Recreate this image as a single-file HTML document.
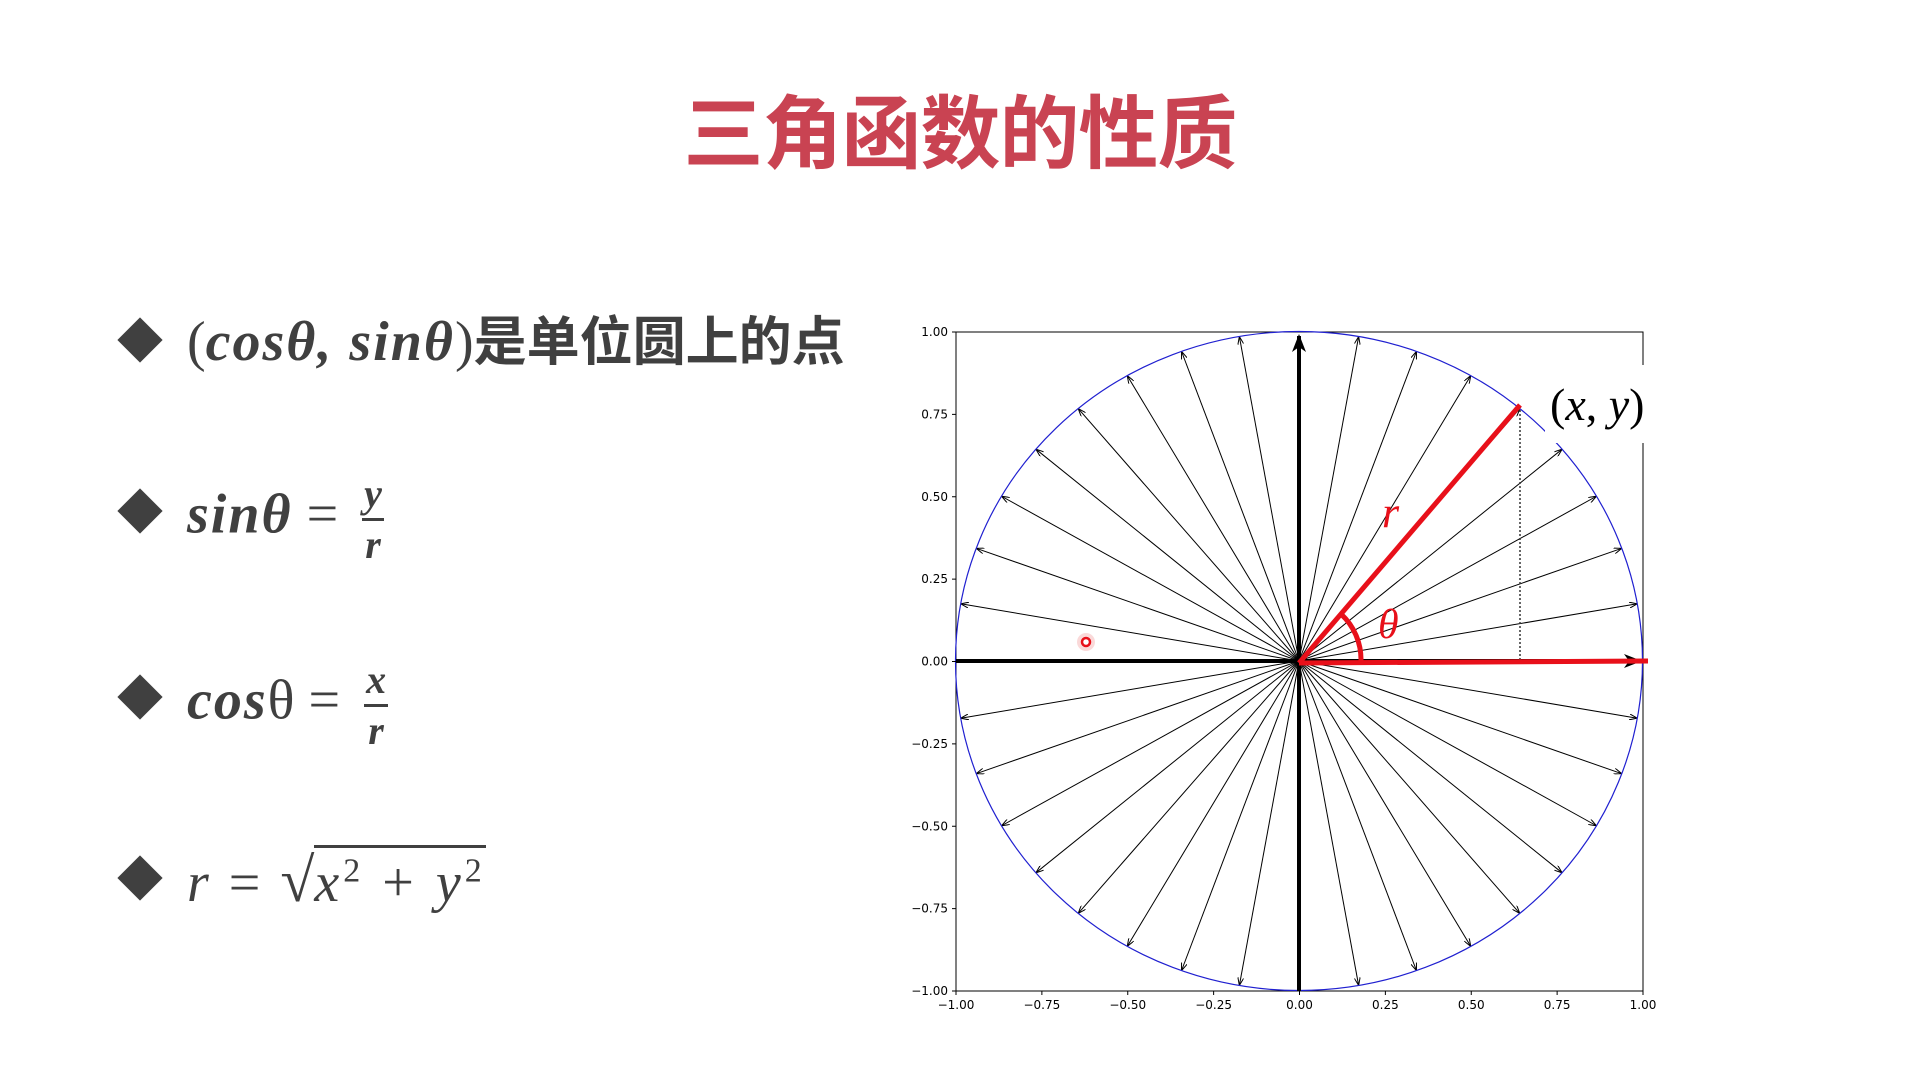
<!DOCTYPE html>
<html><head><meta charset="utf-8">
<style>
html,body{margin:0;padding:0;background:#fff;width:1920px;height:1080px;overflow:hidden;position:relative}
.title{position:absolute;left:0;width:1920px;top:88px;text-align:center;font:bold 80px "Noto Sans CJK SC",sans-serif;color:#c94352;letter-spacing:-1px;line-height:1}
.b{position:absolute;left:124px;width:32px;height:32px;background:#404040;transform:rotate(45deg)}
.t{position:absolute;left:187px;color:#404040;font-family:"Liberation Serif","Noto Sans CJK SC",serif;font-size:56px;white-space:nowrap;line-height:1}
.m{font-style:italic;font-weight:bold;letter-spacing:2px}
.cj{font-family:"Noto Sans CJK SC",sans-serif;font-weight:bold;font-style:normal;font-size:53px;letter-spacing:0px}
.fr{display:inline-block;vertical-align:middle;text-align:center;font-style:italic;font-weight:bold;font-size:40px;line-height:1;margin-left:10px}
.fr span{display:block;padding:0 2px}
.fr .n{border-bottom:3px solid #404040;padding-bottom:4px}
.fr .d{padding-top:4px}
.eq{margin:0 14px}
</style></head><body>
<div class="title">三角函数的性质</div>

<div class="b" style="top:324px"></div>
<div class="t" style="top:312px"><span style="font-weight:normal">(</span><span class="m">cosθ, sinθ</span>)<span class="cj">是单位圆上的点</span></div>

<div class="b" style="top:495px"></div>
<div class="t" style="top:474px"><span class="m">sinθ</span><span class="eq">=</span><span class="fr"><span class="n">y</span><span class="d">r</span></span></div>

<div class="b" style="top:681px"></div>
<div class="t" style="top:660px"><span class="m">cos</span>θ<span class="eq">=</span><span class="fr"><span class="n">x</span><span class="d">r</span></span></div>

<div class="b" style="top:862px"></div>
<div class="t" style="top:850px;font-style:italic"><span>r</span><span class="eq" style="font-style:normal;margin:0 20px">=</span><span style="font-style:normal;font-size:62px">√</span><span style="border-top:3px solid #404040;padding-top:4px;letter-spacing:4px">x<sup style="font-size:34px;font-style:normal">2</sup><span style="font-style:normal;margin:0 18px">+</span>y<sup style="font-size:34px;font-style:normal">2</sup></span></div>

<svg id="plot" width="1920" height="1080" style="position:absolute;left:0;top:0" xmlns="http://www.w3.org/2000/svg">
<defs>
<marker id="ah" markerWidth="8" markerHeight="6" refX="8" refY="3" orient="auto" markerUnits="userSpaceOnUse"><path d="M0,0 L8,3 L0,6" fill="none" stroke="#000" stroke-width="1"/></marker>
<marker id="big" markerWidth="18" markerHeight="14" refX="16" refY="7" orient="auto" markerUnits="userSpaceOnUse"><path d="M0,0 L18,7 L0,14 L5,7 Z" fill="#000"/></marker>
</defs>
<rect x="956" y="332" width="687" height="659" fill="none" stroke="#000" stroke-width="1"/>
<g id="spokes" stroke="#000" stroke-width="1"></g>
<ellipse cx="1299" cy="661" rx="343.5" ry="329.5" fill="none" stroke="#2020d0" stroke-width="1.2"/>
<line x1="956" y1="661" x2="1299" y2="661" stroke="#000" stroke-width="4"/>
<line x1="1299" y1="991" x2="1299" y2="336" stroke="#000" stroke-width="4" marker-end="url(#big)"/>
<line x1="1299" y1="661" x2="1640" y2="661" stroke="#000" stroke-width="4" marker-end="url(#big)"/>
<line x1="1520" y1="406" x2="1520" y2="661" stroke="#333" stroke-width="1.5" stroke-dasharray="2,2"/>
<rect x="1545" y="365" width="100" height="78" fill="#fff"/>
<line x1="1299" y1="663" x2="1648" y2="661" stroke="#e8101a" stroke-width="5"/>
<line x1="1299" y1="663" x2="1520" y2="405" stroke="#e8101a" stroke-width="5"/>
<path d="M1341,614 A62,62 0 0 1 1361,661" fill="none" stroke="#e8101a" stroke-width="5"/>
<text x="1378" y="638" font-family="Liberation Serif" font-style="italic" font-size="42" fill="#e8101a">θ</text>
<text x="1382" y="527" font-family="Liberation Serif" font-style="italic" font-size="44" fill="#e8101a">r</text>
<text x="1550" y="420" font-family="Liberation Serif" font-size="46" fill="#000">(<tspan font-style="italic">x</tspan>, <tspan font-style="italic">y</tspan>)</text>
<circle cx="1086" cy="642" r="9" fill="#f6c0c0" opacity=".6"/>
<circle cx="1086" cy="642" r="4" fill="#fff" stroke="#e8101a" stroke-width="2.5"/>
<g id="ticks" font-family="DejaVu Sans" font-size="12" fill="#000"></g>
</svg>
<script>
var ns="http://www.w3.org/2000/svg",cx=1299,cy=661,rx=343.5,ry=329.5;
var g=document.getElementById('spokes');
for(var a=0;a<360;a+=10){if(a%90==0)continue;var r=a*Math.PI/180;
var l=document.createElementNS(ns,'line');l.setAttribute('x1',cx);l.setAttribute('y1',cy);
l.setAttribute('x2',cx+rx*Math.cos(r));l.setAttribute('y2',cy-ry*Math.sin(r));l.setAttribute('marker-end','url(#ah)');g.appendChild(l);}
var t=document.getElementById('ticks');var labs=['\u22121.00','\u22120.75','\u22120.50','\u22120.25','0.00','0.25','0.50','0.75','1.00'];
for(var i=0;i<9;i++){var x=956+i*687/8,y=991-i*659/8;
var tx=document.createElementNS(ns,'text');tx.setAttribute('x',x);tx.setAttribute('y',1009);tx.setAttribute('text-anchor','middle');tx.textContent=labs[i];t.appendChild(tx);
var ty=document.createElementNS(ns,'text');ty.setAttribute('x',948);ty.setAttribute('y',y+4);ty.setAttribute('text-anchor','end');ty.textContent=labs[i];t.appendChild(ty);
var k=document.createElementNS(ns,'line');k.setAttribute('x1',x);k.setAttribute('x2',x);k.setAttribute('y1',991);k.setAttribute('y2',995);k.setAttribute('stroke','#000');t.appendChild(k);
var k2=document.createElementNS(ns,'line');k2.setAttribute('x1',952);k2.setAttribute('x2',956);k2.setAttribute('y1',y);k2.setAttribute('y2',y);k2.setAttribute('stroke','#000');t.appendChild(k2);}
</script>
</body></html>
